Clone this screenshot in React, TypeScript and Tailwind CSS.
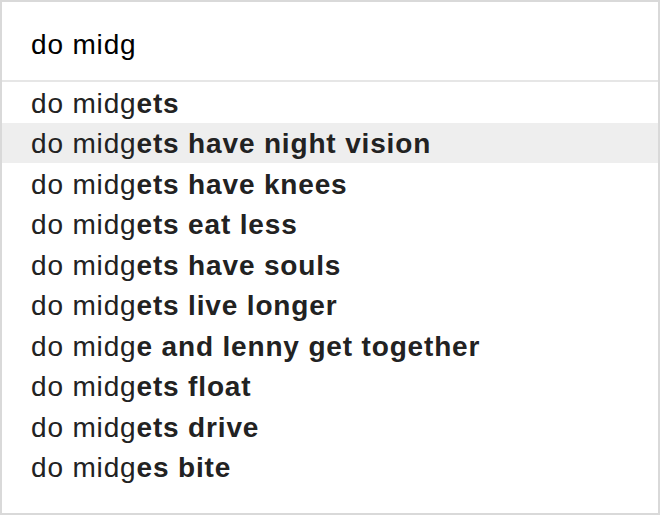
const suggestions: [string, string][] = [
  ['do midg', 'ets'],
  ['do midg', 'ets have night vision'],
  ['do midg', 'ets have knees'],
  ['do midg', 'ets eat less'],
  ['do midg', 'ets have souls'],
  ['do midg', 'ets live longer'],
  ['do midg', 'e and lenny get together'],
  ['do midg', 'ets float'],
  ['do midg', 'ets drive'],
  ['do midg', 'es bite'],
]

export default function App() {
  return (
    <div className="w-[660px] h-[515px] bg-white border-2 border-[#d9d9d9] flex flex-col font-['Liberation_Sans',Arial,sans-serif] text-[28px] tracking-[0.03em]">
      <div className="h-[80px] shrink-0 flex items-center pt-[7px] px-[29px] text-black border-b-2 border-[#e6e6e6]">
        do midg
      </div>
      <ul className="flex flex-col">
        {suggestions.map(([typed, rest], i) => (
          <li
            key={i}
            className={`h-[40.5px] flex items-center pt-[3px] px-[29px] text-[#222] ${i === 1 ? 'bg-[#eeeeee]' : ''}`}
          >
            <span>{typed}</span>
            <b className="font-bold whitespace-pre">{rest}</b>
          </li>
        ))}
      </ul>
    </div>
  )
}
